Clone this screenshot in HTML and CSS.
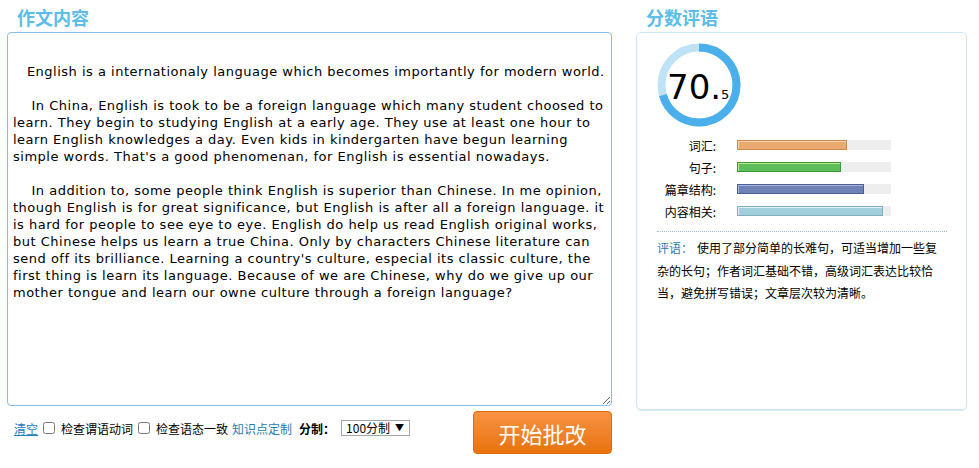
FILE: index.html
```html
<!DOCTYPE html>
<html lang="zh-CN">
<head>
<meta charset="utf-8">
<title>作文批改</title>
<link rel="stylesheet" href="styles.css">
</head>
<body>
<div class="page">
  <section class="col-left">
    <h2 class="title">作文内容</h2>
    <textarea class="essay" wrap="off" spellcheck="false">   English is a internationaly language which becomes importantly for modern world.

    In China, English is took to be a foreign language which many student choosed to
learn. They begin to studying English at a early age. They use at least one hour to
learn English knowledges a day. Even kids in kindergarten have begun learning
simple words. That's a good phenomenan, for English is essential nowadays.

    In addition to, some people think English is superior than Chinese. In me opinion,
though English is for great significance, but English is after all a foreign language. it
is hard for people to see eye to eye. English do help us read English original works,
but Chinese helps us learn a true China. Only by characters Chinese literature can
send off its brilliance. Learning a country's culture, especial its classic culture, the
first thing is learn its language. Because of we are Chinese, why do we give up our
mother tongue and learn our owne culture through a foreign language?</textarea>
    <div class="controls">
      <div class="opts">
        <a class="clear" href="#">清空</a>
        <label class="chk"><input type="checkbox"><span>检查谓语动词</span></label>
        <label class="chk"><input type="checkbox"><span>检查语态一致</span></label>
        <a class="custom" href="#">知识点定制</a>
        <span class="scale-label">分制：</span>
        <span class="select"><span>100分制</span><span class="arrow">▼</span></span>
      </div>
      <button class="submit" type="button">开始批改</button>
    </div>
  </section>
  <section class="col-right">
    <h2 class="title">分数评语</h2>
    <div class="panel">
      <div class="score">
        <svg class="ring" width="84" height="84" viewBox="0 0 84 84">
          <circle cx="42" cy="42" r="37.5" fill="none" stroke="#bfe2f6" stroke-width="8"/>
          <circle cx="42" cy="42" r="37.5" fill="none" stroke="#4aafea" stroke-width="8"
            stroke-dasharray="166.1 235.6" transform="rotate(-90 42 42)"/>
        </svg>
        <div class="num"><span class="big">70.</span><span class="small">5</span></div>
      </div>
      <div class="bars">
        <div class="row"><span class="lbl">词汇:</span><span class="track"><span class="fill f1" style="width:110px"></span></span></div>
        <div class="row"><span class="lbl">句子:</span><span class="track"><span class="fill f2" style="width:104px"></span></span></div>
        <div class="row"><span class="lbl">篇章结构:</span><span class="track"><span class="fill f3" style="width:127px"></span></span></div>
        <div class="row"><span class="lbl">内容相关:</span><span class="track"><span class="fill f4" style="width:146px"></span></span></div>
      </div>
      <p class="comment"><span class="ckey">评语：</span>使用了部分简单的长难句，可适当增加一些复杂的长句；作者词汇基础不错，高级词汇表达比较恰当，避免拼写错误；文章层次较为清晰。</p>
    </div>
  </section>
</div>
<h2 class="title next">批改详情</h2>
</body>
</html>
```

FILE: styles.css
```css
* { box-sizing: border-box; }
html, body { margin: 0; padding: 0; background: #fff; }
body {
  font-family: "Noto Sans CJK SC", "DejaVu Sans", sans-serif;
  font-size: 12px;
  color: #000;
  overflow: hidden;
}
.page {
  display: flex;
  gap: 24px;
  padding: 5px 0 0 7px;
}
.title {
  margin: 0 0 3px;
  padding-left: 10px;
  font-family: "Noto Sans CJK SC", sans-serif;
  font-size: 18px;
  font-weight: bold;
  line-height: 24px;
  color: #5bbde8;
}
.col-left { width: 605px; display: flex; flex-direction: column; }
.col-right { width: 331px; }
.essay {
  display: block;
  width: 605px;
  height: 374px;
  margin: 0;
  padding: 30px 5px 10px;
  border: 1px solid #86bee2;
  border-radius: 4px;
  font-family: "DejaVu Sans", Verdana, sans-serif;
  font-size: 13px;
  letter-spacing: 0.5px;
  line-height: 17px;
  color: #000;
  white-space: pre;
  overflow: hidden;
  resize: both;
  outline: none;
}
.controls {
  display: flex;
  justify-content: space-between;
  align-items: flex-start;
}
.opts {
  display: flex;
  align-items: center;
  margin-top: 14px;
  padding-left: 7px;
  height: 16px;
  white-space: nowrap;
}
.clear { color: #1a7dc0; text-decoration: underline; margin-right: 4px; }
.chk { display: flex; align-items: center; margin-right: 4px; }
.chk input { margin: 0 6px 0 1px; width: 12px; height: 12px; }
.custom { color: #2b7bb3; text-decoration: none; margin-right: 7px; }
.scale-label { font-weight: bold; margin-right: 6px; }
.select {
  display: inline-flex;
  align-items: center;
  justify-content: space-between;
  width: 69px;
  height: 16px;
  padding: 0 5px 0 4px;
  border: 1px solid #a5a5a5;
  font-size: 12px;
  line-height: 14px;
}
.arrow { font-size: 9px; }
.submit {
  margin-top: 5px;
  width: 139px;
  height: 43px;
  border: 1px solid #dd6a0e;
  border-radius: 4px;
  background: linear-gradient(#f89244, #e8730f);
  color: #fff;
  font-family: "Noto Sans CJK SC", sans-serif;
  font-size: 22px;
  padding: 0;
}
.panel {
  height: 378px;
  border: 1px solid #cde5f3;
  border-radius: 5px;
  box-shadow: 0 1px 0 #d6e9f4;
  padding: 10px 19px 0 20px;
}
.score { position: relative; width: 84px; height: 84px; }
.ring { display: block; }
.num {
  position: absolute;
  left: 10px;
  top: 27px;
  font-family: "DejaVu Sans", sans-serif;
  white-space: nowrap;
  line-height: 1;
}
.big { font-size: 34px; }
.small { font-size: 13px; }
.bars { margin-top: 7px; }
.row { display: flex; align-items: center; height: 22px; }
.lbl { width: 59px; text-align: right; margin-right: 21px; font-size: 12px; }
.track { display: block; width: 154px; height: 10px; background: #eeeeee; }
.fill { display: block; height: 10px; border: 1px solid; }
.f1 { background: #e8aa6e; border-color: #c98b52; box-shadow: inset 1px 1px 0 #f6d2ae; }
.f2 { background: #5cbd5a; border-color: #3b963a; box-shadow: inset 1px 1px 0 #b9eb8f; }
.f3 { background: #6e82b6; border-color: #4b5f95; box-shadow: inset 1px 1px 0 #a7b5de; }
.f4 { background: #a3cfdd; border-color: #80afc0; box-shadow: inset 1px 1px 0 #dff1f7; }
.comment {
  margin: 9px 0 0;
  padding: 5px 6px 0 0;
  border-top: 1px dotted #a3b6cf;
  width: 290px;
  font-size: 12px;
  line-height: 22.5px;
}
.ckey { color: #2b7bb3; margin-right: 4px; }
.next { margin-top: 12px; padding-left: 11px; }
```
